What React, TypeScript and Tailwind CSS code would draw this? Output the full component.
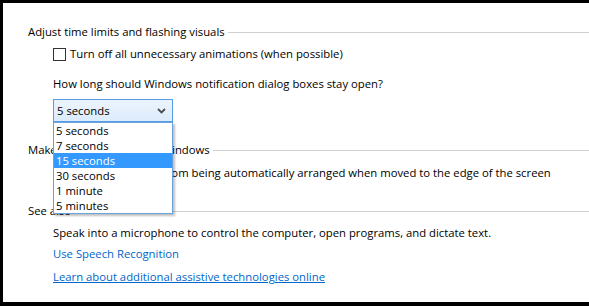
import React from "react";

function Checkbox() {
  return <span className="inline-block w-[13px] h-[13px] border border-[#333333] bg-white shrink-0" />;
}

function Heading({ children }: { children: React.ReactNode }) {
  return (
    <div className="flex items-center h-4">
      <span className="whitespace-nowrap leading-4">{children}</span>
      <span className="flex-1 h-px bg-[#d0d0d0] ml-[3px]" />
    </div>
  );
}

export default function App() {
  const options = ["5 seconds", "7 seconds", "15 seconds", "30 seconds", "1 minute", "5 minutes"];
  return (
    <div
      className="w-[589px] h-[306px] bg-white border-t-[3px] border-l-[3px] border-b-[4px] border-black box-border overflow-hidden text-[11.3px] text-[#000000]"
      style={{ fontFamily: '"Segoe UI", "Open Sans", sans-serif' }}
    >
      <div className="pl-[25px] pt-[21px] flex flex-col">
        <Heading>Adjust time limits and flashing visuals</Heading>
        <div className="pl-[25px] mt-[6px] flex items-center h-4 gap-[4px]">
          <Checkbox />
          <span className="leading-4 whitespace-nowrap">Turn off all unnecessary animations (when possible)</span>
        </div>
        <div className="pl-[25px] mt-[14px] h-4 leading-4 whitespace-nowrap">
          How long should Windows notification dialog boxes stay open?
        </div>
        <div className="pl-[25px] mt-[7px]">
          <div className="relative w-[120px] h-[23px]">
            <div className="w-full h-full border border-[#569de5] bg-gradient-to-b from-[#ebf4fc] to-[#dcecfc] flex items-center pl-[3px] pr-[6px] justify-between box-border">
              <span className="leading-4">5 seconds</span>
              <svg width="9" height="6" viewBox="0 0 9 6">
                <path d="M1 1 L4.5 4.5 L8 1" stroke="#4d4d4d" strokeWidth="1.8" fill="none" />
              </svg>
            </div>
            <div className="absolute left-0 top-[23px] w-[120px] bg-white border border-[#6aa2db] box-border shadow-[2px_2px_2px_rgba(0,0,0,0.25)] z-10 flex flex-col">
              {options.map((o, i) => (
                <div
                  key={o}
                  className={
                    i === 2
                      ? "h-[15px] leading-[15px] pl-[2px] bg-[#3399ff] text-white whitespace-nowrap"
                      : "h-[15px] leading-[15px] pl-[2px] whitespace-nowrap"
                  }
                >
                  {o}
                </div>
              ))}
            </div>
          </div>
        </div>
        <div className="mt-[20px]">
          <Heading>Make it easier to manage windows</Heading>
        </div>
        <div className="pl-[25px] mt-[7px] flex items-center h-4 gap-[4px]">
          <Checkbox />
          <span className="leading-4 whitespace-nowrap">
            Prevent windows from being automatically arranged when moved to the edge of the screen
          </span>
        </div>
        <div className="mt-[22px]">
          <Heading>See also</Heading>
        </div>
        <div className="pl-[25px] mt-[6px] h-4 leading-4 whitespace-nowrap">
          Speak into a microphone to control the computer, open programs, and dictate text.
        </div>
        <div className="pl-[25px] mt-[5px] h-4 leading-4 whitespace-nowrap text-[#0066cc]">Use Speech Recognition</div>
        <div className="pl-[25px] mt-[7px] h-4 leading-4 whitespace-nowrap">
          <span className="text-[#0066cc] underline">Learn about additional assistive technologies online</span>
        </div>
      </div>
    </div>
  );
}
